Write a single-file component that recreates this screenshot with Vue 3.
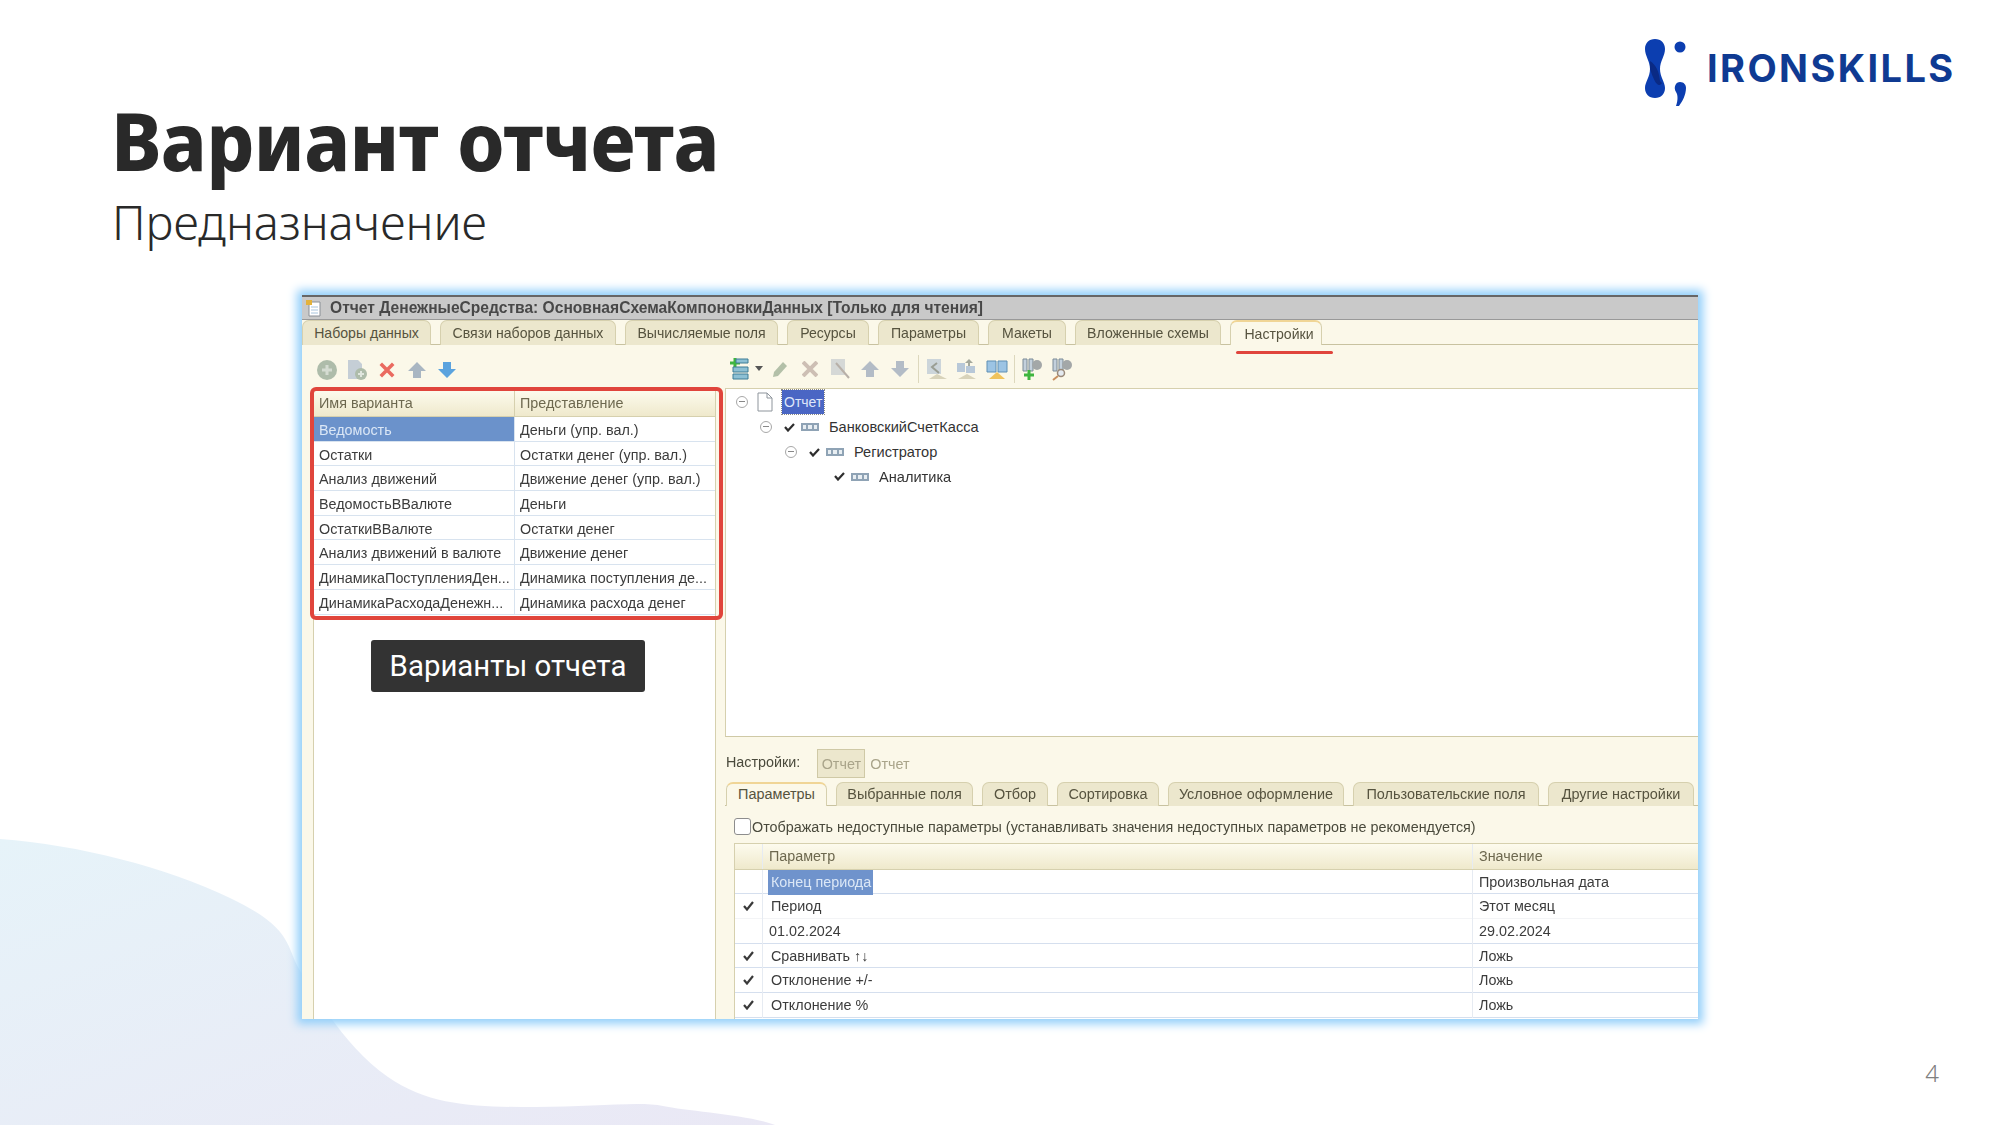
<script setup>
const topTabs = [
  { label: 'Наборы данных', w: 129 },
  { label: 'Связи наборов данных', w: 176 },
  { label: 'Вычисляемые поля', w: 153 },
  { label: 'Ресурсы', w: 82 },
  { label: 'Параметры', w: 101 },
  { label: 'Макеты', w: 78 },
  { label: 'Вложенные схемы', w: 146 },
  { label: 'Настройки', w: 92, active: true },
]

const subTabs = [
  { label: 'Параметры', w: 101, active: true },
  { label: 'Выбранные поля', w: 137 },
  { label: 'Отбор', w: 66 },
  { label: 'Сортировка', w: 102 },
  { label: 'Условное оформление', w: 176 },
  { label: 'Пользовательские поля', w: 186 },
  { label: 'Другие настройки', w: 146 },
]

const variants = [
  ['Ведомость', 'Деньги (упр. вал.)'],
  ['Остатки', 'Остатки денег (упр. вал.)'],
  ['Анализ движений', 'Движение денег (упр. вал.)'],
  ['ВедомостьВВалюте', 'Деньги'],
  ['ОстаткиВВалюте', 'Остатки денег'],
  ['Анализ движений в валюте', 'Движение денег'],
  ['ДинамикаПоступленияДен...', 'Динамика поступления де...'],
  ['ДинамикаРасходаДенежн...', 'Динамика расхода денег'],
]

const tree = [
  { label: 'БанковскийСчетКасса', depth: 0, fold: true },
  { label: 'Регистратор', depth: 1, fold: true },
  { label: 'Аналитика', depth: 2, fold: false },
]

const params = [
  { name: 'Конец периода', value: 'Произвольная дата', check: false, selected: true },
  { name: 'Период', value: 'Этот месяц', check: true, lines: true },
  { name: '01.02.2024', value: '29.02.2024', check: false, sub: true },
  { name: 'Сравнивать ↑↓', value: 'Ложь', check: true },
  { name: 'Отклонение +/-', value: 'Ложь', check: true },
  { name: 'Отклонение %', value: 'Ложь', check: true },
]
</script>

<template>
  <div class="slide">
    <svg class="blob" width="800" height="300" viewBox="0 0 800 300" aria-hidden="true">
      <defs>
        <linearGradient id="blobFill" x1="0" y1="0" x2="1" y2="1">
          <stop offset="0" stop-color="#e6f3f9" />
          <stop offset="1" stop-color="#eae8f5" />
        </linearGradient>
      </defs>
      <path
        d="M0 14C80 20 165 42 230 73S285 122 301 147S345 222 388 252S480 282 536 282S640 276 663 281S750 290 775 300L0 300Z"
        fill="url(#blobFill)"
      />
    </svg>

    <header class="head">
      <h1>Вариант отчета</h1>
      <p>Предназначение</p>
    </header>

    <div class="logo">
      <svg width="50" height="75" viewBox="0 0 50 75" aria-hidden="true">
        <path
          d="M15 4C21 4 25 8 25 14C25 21 20 26 20 34C20 42 25 47 25 53C25 59 21 63 15 63C9 63 5 59 5 53C5 47 10 42 10 34C10 26 5 21 5 14C5 8 9 4 15 4Z"
          fill="#0c3eb0"
        />
        <path d="M10 26C16 30 19 36 20 46L22 48C18 54 14 46 10 34Z" fill="#0a2a85" />
        <circle cx="40" cy="12" r="5.5" fill="#0c3eb0" />
        <path d="M40 47C44 47 46 50 46 53C46 60 42 67 39 71L36 71C38 65 38 60 36 57C33 52 36 47 40 47Z" fill="#0c3eb0" />
      </svg>
      <span>IRONSKILLS</span>
    </div>

    <section class="window">
      <div class="win-title">
        <svg width="18" height="18" viewBox="0 0 18 18" aria-hidden="true">
          <path d="M4 3H15V17H4Z" fill="#fff" stroke="#8a8f96" />
          <path d="M6 8H13M6 11H13M6 14H13" stroke="#a8c4dc" />
          <path d="M1 1H7V6H1Z" fill="#e3b23c" />
        </svg>
        <span>Отчет ДенежныеСредства: ОсновнаяСхемаКомпоновкиДанных [Только для чтения]</span>
      </div>

      <div class="tabs top-tabs">
        <div
          v-for="tab in topTabs"
          :key="tab.label"
          class="tab"
          :class="{ 'is-active': tab.active }"
          :style="{ width: tab.w + 'px' }"
        >
          {{ tab.label }}
          <i v-if="tab.active" class="mark"></i>
        </div>
      </div>

      <div class="body">
        <div class="left">
          <div class="toolbar left-bar">
            <svg width="22" height="22" viewBox="0 0 22 22"><circle cx="11" cy="11" r="10" fill="#aebcaa" /><path d="M11 6V16M6 11H16" stroke="#d5dcd2" stroke-width="3" /></svg>
            <svg width="22" height="22" viewBox="0 0 22 22"><path d="M2 1H12L16 5V20H2Z" fill="#c5ced6" /><circle cx="15" cy="15" r="6" fill="#aebcaa" /><path d="M15 12V18M12 15H18" stroke="#e0e6de" stroke-width="2" /></svg>
            <svg width="16" height="16" viewBox="0 0 18 18"><path d="M2 2L16 16M16 2L2 16" stroke="#ea6a5f" stroke-width="4" /></svg>
            <svg width="20" height="18" viewBox="0 0 20 18"><path d="M10 1L19 10H14V17H6V10H1Z" fill="#a9b6c2" /></svg>
            <svg width="20" height="18" viewBox="0 0 20 18"><path d="M10 17L19 8H14V1H6V8H1Z" fill="#5ba3de" /></svg>
          </div>
          <div class="variants">
            <div class="variant-table">
              <div class="v-row v-head">
                <div>Имя варианта</div>
                <div>Представление</div>
              </div>
              <div v-for="(row, i) in variants" :key="row[0]" class="v-row" :class="{ 'is-current': i === 0 }">
                <div>{{ row[0] }}</div>
                <div>{{ row[1] }}</div>
              </div>
            </div>
            <div class="note">Варианты отчета</div>
          </div>
        </div>

        <div class="right">
          <div class="toolbar right-bar">
            <svg width="20" height="24" viewBox="0 0 20 24"><path d="M5 1V11M0 6H10" stroke="#3fb53f" stroke-width="3" /><path d="M6 2H18V6H6ZM3 10H18V15H3ZM3 17H18V22H3Z" fill="#8cc0d4" stroke="#3d7d96" /></svg>
            <svg width="8" height="5" viewBox="0 0 8 5"><path d="M0 0H8L4 5Z" fill="#555" /></svg>
            <svg width="18" height="18" viewBox="0 0 18 18"><path d="M3 12L12 2L16 6L7 16L2 17Z" fill="#b3c0a8" /></svg>
            <svg width="16" height="16" viewBox="0 0 16 16"><path d="M1 1L15 15M15 1L1 15" stroke="#cdbfb4" stroke-width="4" /></svg>
            <svg width="20" height="22" viewBox="0 0 20 22"><path d="M1 1H15V17H1Z" fill="#d5d8d6" /><path d="M6 5L19 20" stroke="#b8b0a8" stroke-width="2" /></svg>
            <svg width="20" height="18" viewBox="0 0 20 18"><path d="M10 1L19 10H14V17H6V10H1Z" fill="#b3bcc6" /></svg>
            <svg width="20" height="18" viewBox="0 0 20 18"><path d="M10 17L19 8H14V1H6V8H1Z" fill="#b3bcc6" /></svg>
            <i class="sep"></i>
            <svg width="22" height="22" viewBox="0 0 22 22"><path d="M1 1H15V16H1Z" fill="#ccd5da" /><path d="M11 5L6 9L13 15" fill="none" stroke="#9a9e94" stroke-width="2" /><path d="M11 16L21 21H3Z" fill="#d8d3ba" /></svg>
            <svg width="22" height="22" viewBox="0 0 22 22"><path d="M1 5H9V14H1ZM10 8H19V15H10Z" fill="#b8c8d8" /><path d="M13 1L17 5H14V8H12V5H9Z" fill="#a4a89c" /><path d="M11 16L20 21H2Z" fill="#d8d3ba" /></svg>
            <svg width="22" height="22" viewBox="0 0 22 22"><path d="M1 3H10V14H1ZM12 3H21V14H12Z" fill="#9cc4e4" stroke="#5f8fb4" /><path d="M11 14L19 21H3Z" fill="#f0c35c" /></svg>
            <i class="sep"></i>
            <svg width="22" height="24" viewBox="0 0 22 24"><path d="M2 2H6V14H2ZM8 2H12V14H8Z" fill="#c3d0dc" stroke="#7b8a96" /><circle cx="16" cy="8" r="5" fill="#a3a7a8" /><path d="M8 13V23M3 18H13" stroke="#3fb53f" stroke-width="3" /></svg>
            <svg width="22" height="24" viewBox="0 0 22 24"><path d="M2 2H6V14H2ZM8 2H12V14H8Z" fill="#c3d0dc" stroke="#7b8a96" /><circle cx="16" cy="8" r="5" fill="#a3a7a8" /><circle cx="10" cy="16" r="3.5" fill="#e4eaf0" stroke="#9a8a7a" stroke-width="1.5" /><path d="M7 19L2 23" stroke="#c89060" stroke-width="2" /></svg>
          </div>

          <div class="tree">
            <div class="tree-root">
              <i class="fold"></i>
              <svg width="16" height="20" viewBox="0 0 16 20"><path d="M1 1H10L15 6V19H1Z" fill="#fff" stroke="#8e959c" /><path d="M10 1V6H15" fill="none" stroke="#8e959c" /></svg>
              <span class="tree-current">Отчет</span>
            </div>
            <div v-for="node in tree" :key="node.label" class="tree-row" :style="{ paddingLeft: 34 + node.depth * 25 + 'px' }">
              <i class="fold" :class="{ 'no-fold': !node.fold }"></i>
              <svg class="tree-check" width="11" height="9" viewBox="0 0 11 9"><path d="M1 4L4 7.5L10 1" fill="none" stroke="#2e2e2e" stroke-width="2.2" /></svg>
              <svg width="18" height="8" viewBox="0 0 18 8"><rect width="18" height="8" fill="#8fa3b5" /><path d="M2 2H5V6H2ZM7 2H11V6H7ZM13 2H16V6H13Z" fill="#e8eef2" /></svg>
              <span>{{ node.label }}</span>
            </div>
          </div>

          <div class="settings-row">
            <span class="settings-label">Настройки:</span>
            <span class="settings-box">Отчет</span>
            <span class="settings-text">Отчет</span>
          </div>

          <div class="tabs sub-tabs">
            <div
              v-for="tab in subTabs"
              :key="tab.label"
              class="tab"
              :class="{ 'is-active': tab.active }"
              :style="{ width: tab.w + 'px' }"
            >
              {{ tab.label }}
            </div>
          </div>

          <label class="show-row">
            <i class="box"></i>
            <span>Отображать недоступные параметры (устанавливать значения недоступных параметров не рекомендуется)</span>
          </label>

          <div class="param-table">
            <div class="p-row p-head">
              <div></div>
              <div>Параметр</div>
              <div>Значение</div>
            </div>
            <div
              v-for="row in params"
              :key="row.name"
              class="p-row"
              :class="{ 'has-sub': row.lines, 'is-sub': row.sub }"
            >
              <div class="p-check">
                <svg v-if="row.check" width="11" height="10" viewBox="0 0 11 10"><path d="M1 5L4 8.5L10 1" fill="none" stroke="#3a3a3a" stroke-width="2.2" /></svg>
              </div>
              <div class="p-name"><span :class="{ 'is-selected': row.selected }">{{ row.name }}</span></div>
              <div>{{ row.value }}</div>
            </div>
          </div>
        </div>
      </div>
    </section>

    <div class="page-num">4</div>
  </div>
</template>

<style>
html,
body {
  margin: 0;
  background: #fff;
}
</style>

<style scoped>
.slide {
  position: relative;
  width: 2000px;
  height: 1125px;
  overflow: hidden;
  background: #fff;
  font-family: 'Noto Sans', sans-serif;
  color: #292929;
}

.blob {
  position: absolute;
  left: 0;
  bottom: 0;
}

.head {
  position: relative;
  padding: 90px 0 0 111px;
  height: 203px;
  box-sizing: border-box;
}

.head h1 {
  margin: 0;
  font-size: 80px;
  line-height: 100px;
  font-weight: 800;
  letter-spacing: -0.5px;
  transform: scaleX(0.944);
  transform-origin: left center;
  white-space: nowrap;
}

.head p {
  margin: 2px 0 0 1px;
  font-size: 47px;
  line-height: 60px;
  font-weight: 300;
}

.logo {
  position: absolute;
  top: 35px;
  left: 1640px;
  display: flex;
  align-items: flex-start;
  gap: 17px;
}

.logo span {
  margin-top: 10px;
  font-family: 'Inter', sans-serif;
  font-size: 38px;
  line-height: 46px;
  font-weight: 700;
  letter-spacing: 2.4px;
  color: #0f3a92;
}

.page-num {
  position: absolute;
  right: 61px;
  bottom: 36px;
  font-size: 24px;
  font-weight: 300;
  color: #808080;
}

.window {
  position: relative;
  display: flex;
  flex-direction: column;
  width: 1396px;
  height: 724px;
  margin: 92px 0 0 302px;
  background: #fbf8e9;
  box-shadow: 0 0 9px 5px #93cffa;
  font-family: 'Liberation Sans', sans-serif;
  font-size: 14.35px;
  color: #3c3c3c;
  filter: blur(0.4px);
}

.win-title {
  display: flex;
  align-items: center;
  gap: 7px;
  height: 25px;
  padding-left: 3px;
  box-sizing: border-box;
  background: #c9c9c9;
  border-top: 2px solid #666;
  border-bottom: 1px solid #999;
  font-weight: 700;
  font-size: 15.6px;
  color: #484848;
}

.tabs {
  display: flex;
  gap: 9px;
  box-sizing: border-box;
  border-bottom: 1px solid #c8c2a0;
}

.top-tabs {
  height: 25px;
  font-size: 14.1px;
}

.sub-tabs {
  height: 24px;
  margin-top: 4px;
  padding-left: 1px;
  font-size: 14.45px;
}

.tab {
  position: relative;
  display: flex;
  align-items: center;
  justify-content: center;
  height: 25px;
  box-sizing: border-box;
  background: #ece7cd;
  border: 1px solid #d6d0ae;
  border-bottom: none;
  border-radius: 7px 7px 0 0;
  white-space: nowrap;
  color: #56533f;
}

.sub-tabs .tab {
  height: 24px;
  padding-bottom: 2px;
}

.tab.is-active {
  background: #fbf8e9;
  border-top: 2px solid #f0d596;
}

.top-tabs .tab.is-active {
  padding-left: 6px;
}

.mark {
  position: absolute;
  left: 5px;
  top: 29px;
  width: 97px;
  height: 3px;
  background: #e0453c;
  border-radius: 2px;
}

.body {
  flex: 1;
  display: grid;
  grid-template-columns: 423px 1fr;
  min-height: 0;
}

.left {
  display: flex;
  flex-direction: column;
  min-height: 0;
}

.toolbar {
  box-sizing: border-box;
  height: 44px;
  padding-top: 4px;
  align-items: center;
  justify-items: center;
  display: grid;
}

.left-bar {
  height: 45px;
  grid-template-columns: repeat(5, 30px);
  justify-content: start;
  padding-left: 10px;
}

.variants {
  flex: 1;
  margin: 0 9px 0 11px;
  background: #fff;
  border-left: 1px solid #d6d0ae;
  border-right: 1px solid #d6d0ae;
}

.variant-table {
  position: relative;
}

.variant-table::after {
  content: '';
  position: absolute;
  inset: -3px -8px -5px -4px;
  border: 4px solid #e0453c;
  border-radius: 6px;
}

.v-row {
  display: grid;
  grid-template-columns: 201px 1fr;
  height: 24.7px;
  box-sizing: border-box;
  border-bottom: 1px solid #d8e3ef;
  line-height: 26px;
}

.v-row > div {
  padding-left: 5px;
  white-space: nowrap;
  overflow: hidden;
}

.v-row > div:first-child {
  border-right: 1px solid #d8e3ef;
}

.v-head {
  height: 27px;
  line-height: 26px;
  background: linear-gradient(#fdfbee, #efe9cc);
  border-bottom: 1px solid #d6d0ae;
  color: #6d684f;
}

.v-head > div:first-child {
  border-right: 1px solid #d6d0ae;
}

.is-current > div:first-child {
  background: #6b92cb;
  color: #dbe7f6;
}

.note {
  display: flex;
  align-items: center;
  justify-content: center;
  width: 274px;
  height: 52px;
  margin: 25px 0 0 57px;
  border-radius: 3px;
  background: #333;
  color: #fff;
  font-family: 'Roboto', sans-serif;
  font-size: 29.4px;
}

.right {
  display: flex;
  flex-direction: column;
  min-height: 0;
  min-width: 0;
}

.right-bar {
  grid-template-columns: 24px 13px repeat(5, 30px) 7px repeat(3, 30px) 5px repeat(2, 30px);
  justify-content: start;
  padding-left: 3px;
  border-bottom: 1px solid #d6d0ae;
}

.sep {
  width: 1px;
  height: 28px;
  background: #ddd8bd;
}

.tree {
  height: 348px;
  box-sizing: border-box;
  background: #fff;
  border-left: 1px solid #d6d0ae;
  border-bottom: 1px solid #cfc9a6;
  color: #333;
  font-size: 14.6px;
}

.tree-root {
  display: flex;
  align-items: center;
  gap: 9px;
  height: 26px;
  padding-left: 10px;
}

.tree-current {
  padding: 0 2px;
  font-size: 14px;
  line-height: 24px;
  background: #4a66c4;
  outline: 1px dotted #888;
  color: #dfe6fa;
}

.tree-row {
  display: flex;
  align-items: center;
  gap: 6px;
  height: 24.7px;
}

.tree-row span {
  margin-left: 4px;
}

.tree-check {
  margin-left: 6px;
}

.fold {
  position: relative;
  width: 10px;
  height: 10px;
  border: 1px solid #a8a8a8;
  border-radius: 50%;
  background: #fff;
}

.fold::after {
  content: '';
  position: absolute;
  left: 2px;
  top: 4px;
  width: 6px;
  height: 1px;
  background: #888;
}

.no-fold {
  visibility: hidden;
}

.settings-row {
  display: flex;
  align-items: center;
  height: 29px;
  margin-top: 12px;
  padding-left: 1px;
  color: #4a4a3c;
}

.settings-box {
  width: 48px;
  height: 29px;
  margin-left: 17px;
  box-sizing: border-box;
  border: 1px solid #cfc9a6;
  background: #ece7cd;
  line-height: 29px;
  text-align: center;
  color: #a9a48a;
}

.settings-text {
  margin-left: 5px;
  color: #a9a48a;
}

.settings-label {
  margin-top: -4px;
}

.show-row {
  display: flex;
  align-items: center;
  height: 36.5px;
  box-sizing: border-box;
  padding: 6px 0 1.5px 9px;
  color: #4a4a3c;
}

.box {
  width: 15px;
  height: 15px;
  margin-right: 1px;
  border: 1px solid #8d8d8d;
  border-radius: 3px;
  background: #fff;
}

.param-table {
  flex: 1;
  margin-left: 9px;
  background: #fff;
  border-left: 1px solid #d6d0ae;
}

.p-row {
  display: grid;
  grid-template-columns: 28px 710px 1fr;
  height: 24.7px;
  box-sizing: border-box;
  border-bottom: 1px solid #d5dfee;
  line-height: 25px;
}

.p-row > div {
  padding-left: 6px;
  border-right: 1px solid #e6ebf2;
}

.p-row > div:last-child {
  border-right: none;
}

.p-row > .p-check {
  display: flex;
  align-items: flex-start;
  justify-content: center;
  padding: 7px 0 0;
}

.p-row > .p-name {
  padding-left: 8px;
}

.p-head {
  height: 27px;
  line-height: 25px;
  background: linear-gradient(#fdfbee, #efe9cc);
  border-top: 1px solid #d6d0ae;
  border-bottom: 1px solid #d6d0ae;
  color: #6d684f;
}

.p-head > div {
  padding-left: 6px;
}

.has-sub {
  border-bottom-color: #f3f4f6;
}

.is-sub > .p-name {
  padding-left: 6px !important;
}

.is-selected {
  display: inline-block;
  width: 105px;
  margin-left: -3px;
  padding-left: 3px;
  box-sizing: border-box;
  background: #6f93cc;
  color: #dbe7f6;
}
</style>
